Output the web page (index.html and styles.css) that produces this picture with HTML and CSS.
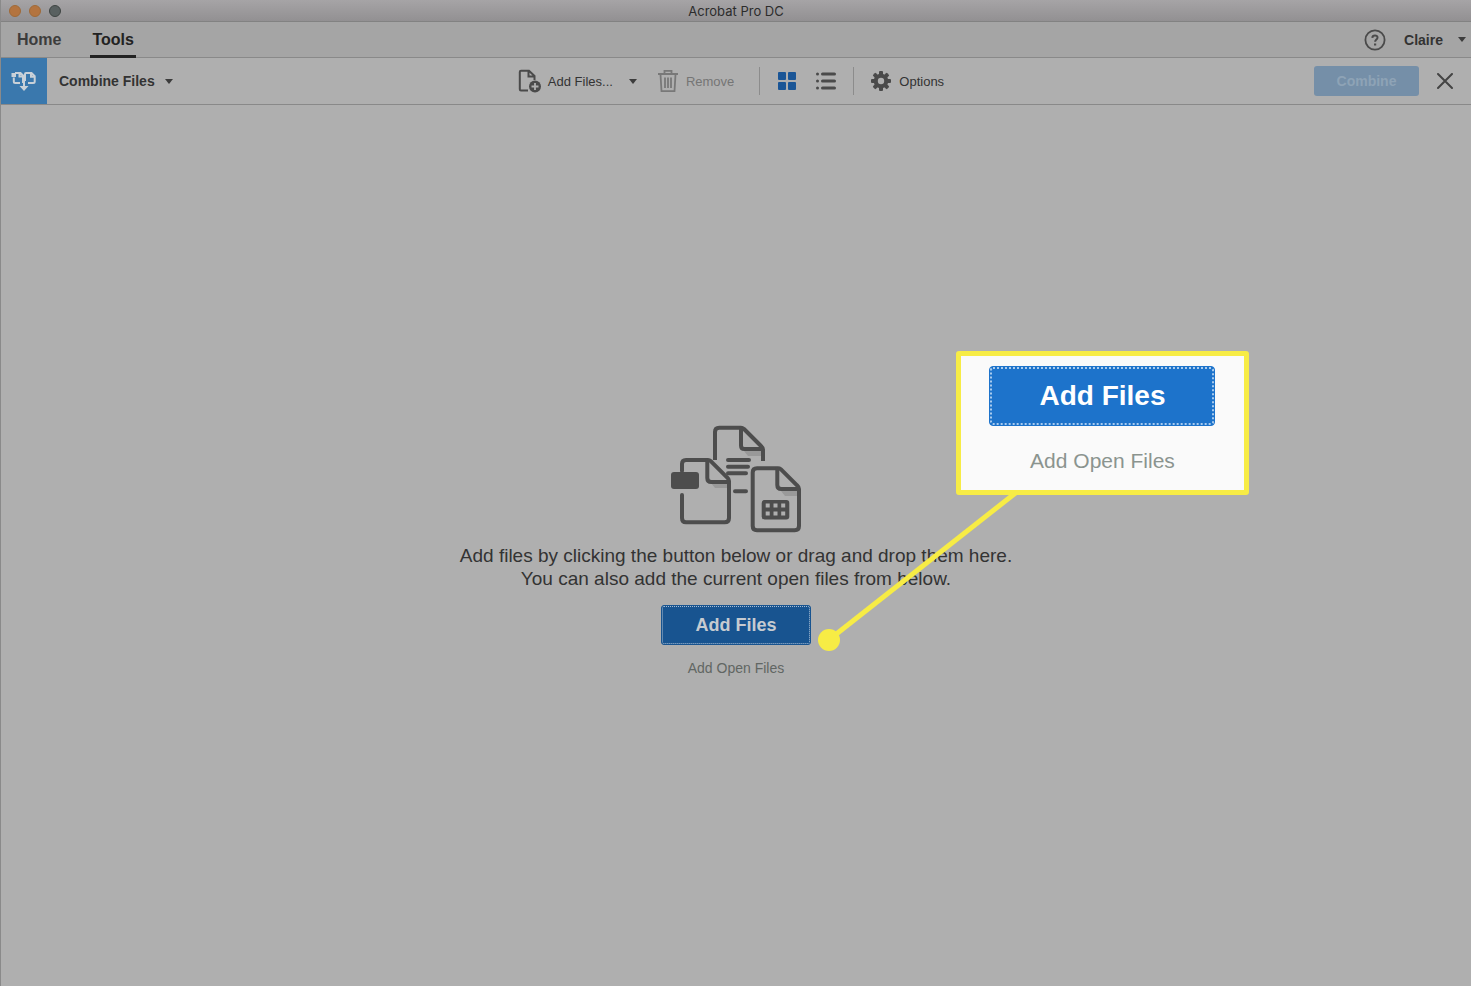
FILE: index.html
```html
<!DOCTYPE html>
<html lang="en">
<head>
<meta charset="utf-8">
<title>Acrobat Pro DC</title>
<link rel="stylesheet" href="styles.css">
</head>
<body>
<div class="window">
  <header class="titlebar">
    <div class="lights"><span class="light"></span><span class="light"></span><span class="light light-zoom"></span></div>
    <h1 class="title">Acrobat Pro DC</h1>
  </header>

  <nav class="tabs">
    <a class="tab" href="#home">Home</a>
    <a class="tab tab-active" href="#tools">Tools</a>
    <div class="account">
      <button class="plain" aria-label="Help">
        <svg width="22" height="22" viewBox="0 0 22 22" fill="none" stroke="#4a4a4a" stroke-width="2"><circle cx="11" cy="11" r="9.600" stroke-width="1.800"/><path d="M8.300 8.900c.2-3.200 5.400-3.100 5.200-.1-.1 1.700-2.300 1.900-2.400 4"/><path d="M10 14.500h2.200v2H10z" fill="#4a4a4a" stroke="none"/></svg>
      </button>
      <button class="plain user">Claire <span class="caret"></span></button>
    </div>
  </nav>

  <div class="toolbar">
    <div class="tool-name">
      <span class="tool-icon">
        <svg width="26" height="26" viewBox="0 0 26 26" fill="none" stroke="#c9d1d8" stroke-width="2"><path d="M2.800 9.500v4q0 1.500 1.500 1.500H9M4 5h5.500L12 7.500V15M8.500 5v3.500H12M14 13V6q0-1 1-1h5.500l3.200 3.200v5.300q0 1.500-1.500 1.500H17M20 5v3.700h3.500M13 11v8"/><path d="M.500 5h4.500v4H.500zM8.500 18h9L13 23z" fill="#c9d1d8" stroke="none"/></svg>
      </span>
      <button class="plain name">Combine Files <span class="caret"></span></button>
    </div>

    <div class="actions">
      <button class="plain">
        <svg width="24" height="24" viewBox="0 0 24 24" fill="none" stroke="#4a4a4a" stroke-width="2"><path d="M10 21.500H3q-1.200 0-1.200-1.200V3q0-1.200 1.200-1.200h8l5.500 5.200v4M10.500 2v5.500H16.500"/><circle cx="17" cy="17.500" r="6" fill="#4a4a4a" stroke="none"/><path d="M17 14v7M13.500 17.500h7" stroke="#b0b0b0" stroke-width="1.800"/></svg>
        Add Files...
      </button>
      <button class="plain more" aria-label="More ways to add files"><span class="caret"></span></button>
      <button class="plain remove" disabled>
        <svg width="20" height="24" viewBox="0 0 20 24" fill="none" stroke="#787878" stroke-width="1.800"><path d="M0 5h20M6.500 4.500V1.800h7v2.700M2.500 5.500l1 16.700h13l1-16.700M7 8.500v10.500M10 8.500v10.500M13 8.500v10.500"/></svg>
        Remove
      </button>
      <span class="divider"></span>
      <button class="plain" aria-label="Thumbnail view">
        <svg width="18" height="18" viewBox="0 0 18 18" fill="#1a5596"><rect width="8" height="8" rx="1"/><rect x="10" width="8" height="8" rx="1"/><rect y="10" width="8" height="8" rx="1"/><rect x="10" y="10" width="8" height="8" rx="1"/></svg>
      </button>
      <button class="plain list" aria-label="List view">
        <svg width="20" height="18" viewBox="0 0 20 18" fill="#4a4a4a"><circle cx="1.500" cy="2" r="1.500"/><circle cx="1.500" cy="9" r="1.500"/><circle cx="1.500" cy="16" r="1.500"/><rect x="5" y=".5" width="15" height="3" rx="1.500"/><rect x="5" y="7.500" width="15" height="3" rx="1.500"/><rect x="5" y="14.500" width="15" height="3" rx="1.500"/></svg>
      </button>
      <span class="divider"></span>
      <button class="plain options">
        <svg width="20" height="20" viewBox="0 0 20 20"><g fill="#4a4a4a"><rect id="t" x="8" width="4" height="20" rx="1"/><use href="#t" transform="rotate(45 10 10)"/><use href="#t" transform="rotate(90 10 10)"/><use href="#t" transform="rotate(135 10 10)"/><circle cx="10" cy="10" r="7.300"/></g><circle cx="10" cy="10" r="3.200" fill="#b0b0b0"/></svg>
        Options
      </button>
    </div>

    <div class="finish">
      <button class="combine" disabled>Combine</button>
      <button class="plain" aria-label="Close">
        <svg width="16" height="16" viewBox="0 0 16 16" fill="none" stroke="#444" stroke-width="2" stroke-linecap="round"><path d="M1 1l14 14M15 1L1 15"/></svg>
      </button>
    </div>
  </div>

  <main class="stage">
    <section class="empty">
      <svg class="art" width="134" height="112" viewBox="0 0 134 112" fill="none" stroke="#4d4d4d" stroke-width="4" stroke-linecap="round" stroke-linejoin="round">
        <g fill="#999" stroke="none"><path d="M75 28h17v5H79zM42 60h16v5H46zM112 68h16v5h-12z"/></g>
        <path d="M46 37V9q0-4.300 4.300-4.300H72q1.500 0 3 1.300l17 17q2 1.800 2 3.500v11.500" stroke-linecap="butt"/>
        <path d="M72 5v17.500q0 3.500 3.500 3.500H93"/>
        <path d="M59 37h21M59 43.700h20M59 50.300h18M66 68.300h11"/>
        <path d="M13 48v-7q0-4 4-4h22q1.500 0 3 1.300l16 16q2 1.800 2 3.700v37q0 4.300-4.300 4.300H17q-4 0-4-4.300V72"/>
        <path d="M38.300 38v17q0 4 4 4H59"/>
        <rect x="2" y="49" width="28" height="17" rx="3" fill="#4d4d4d" stroke="none"/>
        <path d="M109 45.300H88q-4.300 0-4.300 4.300V103q0 4.200 4.300 4.200h37.700q4.300 0 4.300-4.200V66q0-1.900-2-3.700l-16-16q-1.500-1-3-1z"/>
        <path d="M108.300 46v16q0 4 4 4H129"/>
        <rect x="92.700" y="77" width="27.600" height="19.500" rx="3" fill="#4d4d4d" stroke="none"/>
        <path d="M96.700 80.500h4v4h-4zM104.500 80.500h4v4h-4zM112.200 80.500h4v4h-4zM96.700 88.500h4v4h-4zM104.500 88.500h4v4h-4zM112.200 88.500h4v4h-4z" fill="#afafaf" stroke="none"/>
      </svg>
      <p class="hint">Add files by clicking the button below or drag and drop them here.<br>You can also add the current open files from below.</p>
      <button class="add">Add Files</button>
      <button class="plain open">Add Open Files</button>

      <svg class="leader" width="204" height="162" viewBox="0 0 204 162" fill="none"><path d="M12 149L200 1" stroke="#f7ec45" stroke-width="5"/><circle cx="11" cy="150" r="11" fill="#f7ec45"/></svg>
      <aside class="callout">
        <button class="add add-large">Add Files</button>
        <button class="plain open open-large">Add Open Files</button>
      </aside>
    </section>
  </main>
</div>
</body>
</html>
```
FILE: styles.css
```css
* {
  box-sizing: border-box;
}

body {
  margin: 0;
  background: #afafaf;
  color: #333;
  font-family: "Liberation Sans", Arial, sans-serif;
  font-size: 13px;
}

svg {
  display: block;
  flex: none;
}

.window {
  display: flex;
  flex-direction: column;
  min-height: 100vh;
  border-left: 1px solid #8a8a8a;
}

.plain {
  display: flex;
  align-items: center;
  gap: 6px;
  padding: 0;
  border: 0;
  background: none;
  color: inherit;
  font: inherit;
  white-space: nowrap;
}

.caret {
  border: 4px solid transparent;
  border-top: 5px solid #3c3c3c;
  border-bottom: 0;
}

.titlebar {
  display: grid;
  grid-template-columns: 1fr auto 1fr;
  align-items: center;
  height: 22px;
  padding: 0 8px;
  border-bottom: 1px solid #828282;
  background: linear-gradient(#a6a4a6, #929092);
}

.lights {
  display: flex;
  gap: 8px;
}

.light {
  width: 12px;
  height: 12px;
  border: 1px solid #a06a38;
  border-radius: 50%;
  background: #b37440;
}

.light-zoom {
  border-color: #3e4442;
  background: #596060;
}

.title {
  margin: 0;
  color: #2c2c2c;
  font: 400 13px/20px Inter, sans-serif;
}

.tabs {
  display: flex;
  gap: 29px;
  height: 36px;
  padding-left: 16px;
  border-bottom: 1px solid #898989;
  background: #a5a5a5;
}

.tab {
  height: 36px;
  color: #3c3c3c;
  font-size: 16px;
  font-weight: 700;
  line-height: 35px;
  text-decoration: none;
}

.tab-active {
  padding: 0 2px;
  border-bottom: 3px solid #222;
  color: #222;
}

.account {
  display: flex;
  align-items: center;
  gap: 18px;
  margin-left: auto;
  padding-right: 5px;
}

.user {
  gap: 15px;
  font-size: 14px;
  font-weight: 700;
}

.toolbar {
  display: grid;
  grid-template-columns: 1fr auto 1fr;
  align-items: center;
  height: 47px;
  border-bottom: 1px solid #898989;
}

.tool-name {
  display: flex;
  align-items: center;
  gap: 12px;
}

.tool-icon {
  display: grid;
  place-items: center;
  width: 46px;
  height: 46px;
  background: #3a78ad;
}

.name {
  gap: 10px;
  font-size: 14px;
  font-weight: 700;
}

.actions {
  display: flex;
  align-items: center;
  margin-right: 10px;
}

.more {
  margin: 0 21px 0 16px;
}

.remove {
  gap: 8px;
  color: #757575;
}

.divider {
  width: 1px;
  height: 28px;
  margin: 0 18px 0 25px;
  background: #8c8c8c;
}

.list {
  margin-left: 20px;
}

.list + .divider {
  margin: 0 17px;
}

.options {
  gap: 8px;
}

.finish {
  display: flex;
  align-items: center;
  justify-content: flex-end;
  gap: 18px;
  padding-right: 18px;
}

.combine {
  width: 105px;
  height: 30px;
  border: 0;
  border-radius: 3px;
  background: #758fa8;
  color: #8ea3b6;
  font: 700 14px "Liberation Sans", Arial, sans-serif;
}

.stage {
  display: flex;
  flex: 1;
  align-items: center;
  justify-content: center;
  padding-top: 8px;
}

.empty {
  position: relative;
  display: flex;
  flex-direction: column;
  align-items: center;
}

.art {
  margin-bottom: 9px;
}

.hint {
  margin: 0 0 15px;
  font-size: 19px;
  line-height: 23px;
  text-align: center;
}

.add {
  width: 150px;
  height: 40px;
  border: 1px solid #185490;
  border-radius: 3px;
  outline: 1px dotted #a9bdd2;
  outline-offset: -2px;
  background: #185490;
  color: #c6cbd0;
  font: 700 18px "Liberation Sans", Arial, sans-serif;
}

.open {
  margin-top: 15px;
  color: #616663;
  font-size: 14px;
}

.leader {
  position: absolute;
  bottom: 24px;
  left: calc(50% + 82px);
}

.callout {
  position: absolute;
  top: -72px;
  left: calc(50% + 220px);
  display: flex;
  flex-direction: column;
  align-items: center;
  width: 293px;
  padding: 10px 0 17px;
  border: 5px solid #f7ec45;
  border-radius: 3px;
  background: #fafafa;
}

.add-large {
  width: 226px;
  height: 60px;
  border-color: #1d73cb;
  border-radius: 4px;
  outline: 2px dotted #a9cbee;
  outline-offset: -3px;
  background: #1d73cb;
  color: #fff;
  font-size: 28px;
}

.open-large {
  margin-top: 23px;
  color: #8b948f;
  font-size: 21px;
}
```
